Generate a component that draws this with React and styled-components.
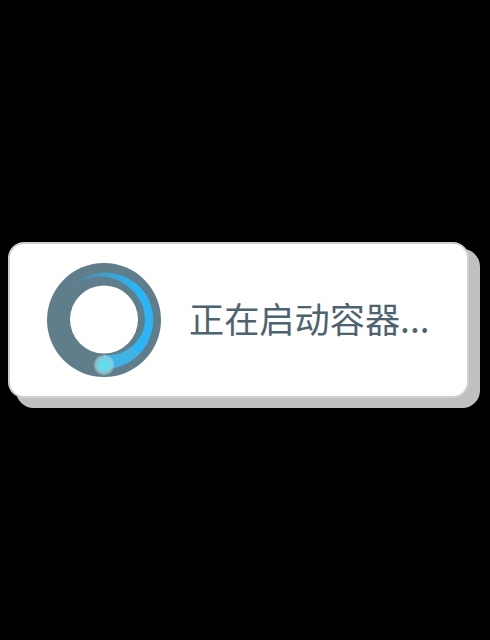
import React from 'react'
import styled, { createGlobalStyle } from 'styled-components'

const GlobalStyle = createGlobalStyle`
    html, body {
        margin: 0;
        padding: 0;
        background: #000;
    }
`

const Screen = styled.div`
    width: 490px;
    height: 640px;
    display: flex;
    align-items: center;
    padding-left: 8px;
    box-sizing: border-box;
    overflow: hidden;
    background: #000;
`

const Toast = styled.div`
    width: 461px;
    height: 156px;
    box-sizing: border-box;
    display: flex;
    align-items: center;
    gap: 28px;
    padding-left: 37px;
    background: #fff;
    border: 2px solid #cfcfcf;
    border-radius: 16px;
    box-shadow: 9.5px 8.5px 0 1.5px #c0c0c0;
`

const Spinner = styled.svg`
    width: 114px;
    height: 114px;
    flex: none;
`

const Message = styled.span`
    padding-bottom: 4px;
    color: #4d6370;
    font-family: "Noto Sans CJK SC", "Noto Sans", sans-serif;
    font-size: 35.2px;
    line-height: 1;
    white-space: nowrap;
`

const polar = (deg, r) => {
    const a = (deg * Math.PI) / 180
    return [57 + r * Math.sin(a), 57 - r * Math.cos(a)]
}

// arc is fat at the glow, even on the right side, then thins out to nothing at top left
const arcSegments = Array.from({ length: 70 }, (_, i) => {
    const t = i / 69
    const start = 180 - t * 230
    const end = start - 230 / 69 - 0.6
    const inner = t < 0.35 ? 35 + (t / 0.35) * 6 : 41
    const outer = t < 0.5 ? 49 : 49 - ((t - 0.5) / 0.5) * 3
    const thin = t > 0.6 ? ((t - 0.6) / 0.4) * 5 : 0
    const r = (inner + thin + outer) / 2
    const [x1, y1] = polar(start, r)
    const [x2, y2] = polar(end, r)
    return {
        d: `M${x1} ${y1}A${r} ${r} 0 0 0 ${x2} ${y2}`,
        width: outer - inner - thin,
        opacity: t < 0.58 ? 1 : 1 - ((t - 0.58) / 0.42) * 0.98,
        tone: t < 0.2 ? '#3fb4e6' : '#29b6f6',
    }
})

function LoadingRing() {
    return (
        <Spinner viewBox="0 0 114 114">
            <defs>
                <radialGradient id="glow">
                    <stop offset="0" stopColor="#5fe2f0" />
                    <stop offset="0.45" stopColor="#62dcec" />
                    <stop offset="0.75" stopColor="#a4d6e0" stopOpacity="0.7" />
                    <stop offset="1" stopColor="#c0dde4" stopOpacity="0" />
                </radialGradient>
                <filter id="soft" x="-10%" y="-10%" width="120%" height="120%">
                    <feGaussianBlur stdDeviation="0.5" />
                </filter>
            </defs>
            <circle cx="57" cy="57" r="57" fill="#607d8b" />
            <g filter="url(#soft)">
                {arcSegments.map((s) => (
                    <path key={s.d} d={s.d} fill="none" stroke={s.tone} strokeWidth={s.width} strokeOpacity={s.opacity} />
                ))}
            </g>
            <circle cx="57" cy="56.5" r="34" fill="#fff" />
            <circle cx="57" cy="102" r="11" fill="url(#glow)" />
        </Spinner>
    )
}

export default function App() {
    return (
        <>
            <GlobalStyle />
            <Screen>
                <Toast>
                    <LoadingRing />
                    <Message>正在启动容器...</Message>
                </Toast>
            </Screen>
        </>
    )
}
